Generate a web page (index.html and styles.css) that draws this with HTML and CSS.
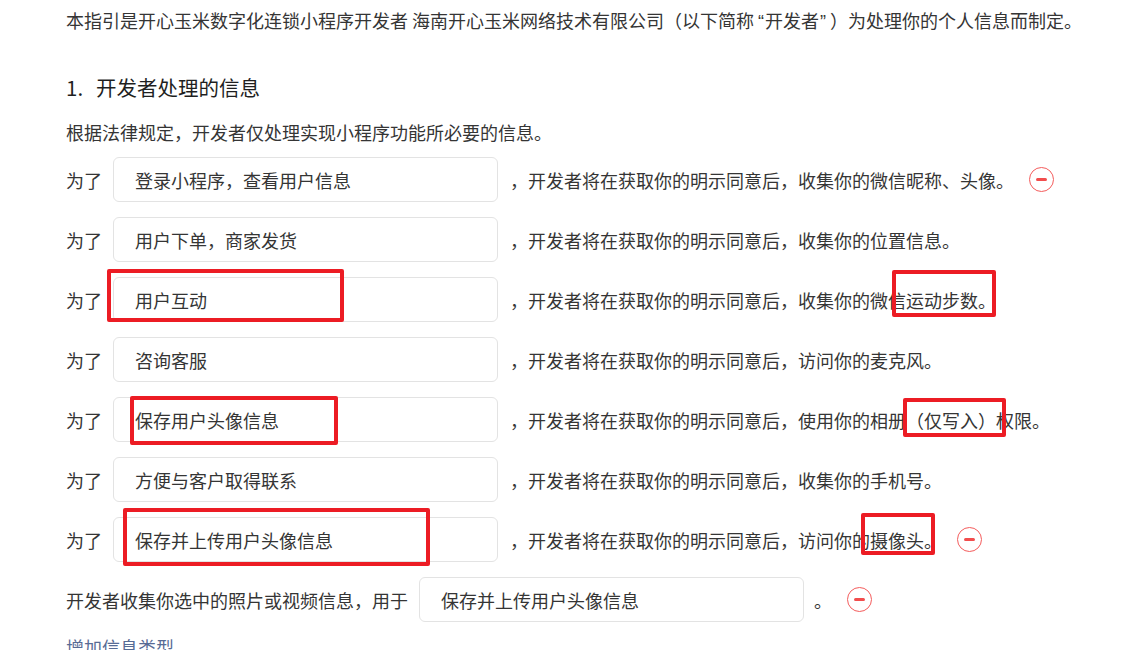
FILE: index.html
```html
<!DOCTYPE html>
<html lang="zh-CN">
<head>
<meta charset="utf-8">
<link rel="stylesheet" href="styles.css">
</head>
<body>
<div class="page">
  <p class="intro">本指引是开心玉米数字化连锁小程序开发者 海南开心玉米网络技术有限公司（以下简称<span class="lq">“</span>开发者<span class="rq">”</span>）为处理你的个人信息而制定。</p>
  <h2 class="title"><span class="num">1.</span>开发者处理的信息</h2>
  <p class="lead">根据法律规定，开发者仅处理实现小程序功能所必要的信息。</p>
  <div class="rows">
    <div class="row"><span class="label">为了</span><div class="field">登录小程序，查看用户信息</div><span class="desc">，开发者将在获取你的明示同意后，收集你的微信昵称、头像。</span><span class="minus"></span></div>
    <div class="row"><span class="label">为了</span><div class="field">用户下单，商家发货</div><span class="desc">，开发者将在获取你的明示同意后，收集你的位置信息。</span></div>
    <div class="row"><span class="label">为了</span><div class="field">用户互动</div><span class="desc">，开发者将在获取你的明示同意后，收集你的微信运动步数。</span></div>
    <div class="row"><span class="label">为了</span><div class="field">咨询客服</div><span class="desc">，开发者将在获取你的明示同意后，访问你的麦克风。</span></div>
    <div class="row"><span class="label">为了</span><div class="field">保存用户头像信息</div><span class="desc">，开发者将在获取你的明示同意后，使用你的相册（仅写入）权限。</span></div>
    <div class="row"><span class="label">为了</span><div class="field">方便与客户取得联系</div><span class="desc">，开发者将在获取你的明示同意后，收集你的手机号。</span></div>
    <div class="row"><span class="label">为了</span><div class="field">保存并上传用户头像信息</div><span class="desc">，开发者将在获取你的明示同意后，访问你的摄像头。</span><span class="minus"></span></div>
    <div class="row"><span class="label">开发者收集你选中的照片或视频信息，用于</span><div class="field">保存并上传用户头像信息</div><span class="desc period">。</span><span class="minus"></span></div>
  </div>
  <a class="add-link">增加信息类型</a>
</div>
<div class="mark m1"></div>
<div class="mark m2"></div>
<div class="mark m3"></div>
<div class="mark m4"></div>
<div class="mark m5"></div>
<div class="mark m6"></div>
</body>
</html>
```
FILE: styles.css
```css
html, body {
  margin: 0;
  padding: 0;
  background: #ffffff;
  overflow: hidden;
}
body {
  font-family: "Noto Sans CJK SC", "Noto Sans", sans-serif;
  font-size: 18px;
  color: #353535;
}
.page {
  padding: 6px 0 0 66px;
  display: flex;
  flex-direction: column;
  align-items: flex-start;
}
.intro {
  margin: 0;
  height: 28px;
  line-height: 28px;
  white-space: nowrap;
}
.lq,
.rq {
  font-family: "Liberation Sans", sans-serif;
  line-height: 1;
}
.lq {
  padding-left: 4px;
  padding-right: 1px;
}
.rq {
  padding-left: 1px;
  padding-right: 4px;
}
.title {
  margin: 37px 0 0;
  font-size: 20.5px;
  font-weight: normal;
  line-height: 32px;
  color: #1f1f1f;
}
.num {
  display: inline-block;
  width: 30px;
}
.lead {
  margin: 15px 0 0;
  line-height: 28px;
}
.rows {
  margin-top: 11px;
  display: flex;
  flex-direction: column;
  gap: 15px;
}
.row {
  display: flex;
  align-items: center;
  height: 45px;
  white-space: nowrap;
}
.label {
  margin-right: 11px;
}
.field {
  box-sizing: border-box;
  width: 385px;
  height: 45px;
  border: 1px solid #e3e3e3;
  border-radius: 6px;
  padding-left: 21px;
  display: flex;
  align-items: center;
  color: #353535;
}
.desc {
  margin-left: 12px;
}
.period {
  margin-left: 10px;
}
.minus {
  margin-left: 15px;
  width: 23px;
  height: 23px;
  border: 1px solid #f45c5c;
  border-radius: 50%;
  display: flex;
  align-items: center;
  justify-content: center;
}
.minus::before {
  content: "";
  width: 11px;
  height: 3px;
  border-radius: 2px;
  background: #f24d4d;
}
.add-link {
  margin-top: 11px;
  line-height: 28px;
  color: #576b95;
  cursor: pointer;
}
.mark {
  position: absolute;
  box-sizing: border-box;
  border: 4px solid #ec1c24;
  border-radius: 2px;
}
.m1 { left: 107px; top: 269px; width: 237px; height: 53px; }
.m2 { left: 892px; top: 270px; width: 104px; height: 47px; }
.m3 { left: 130px; top: 396px; width: 208px; height: 49px; }
.m4 { left: 903px; top: 398px; width: 103px; height: 39px; }
.m5 { left: 123px; top: 508px; width: 307px; height: 58px; }
.m6 { left: 861px; top: 513px; width: 74px; height: 42px; }
```
